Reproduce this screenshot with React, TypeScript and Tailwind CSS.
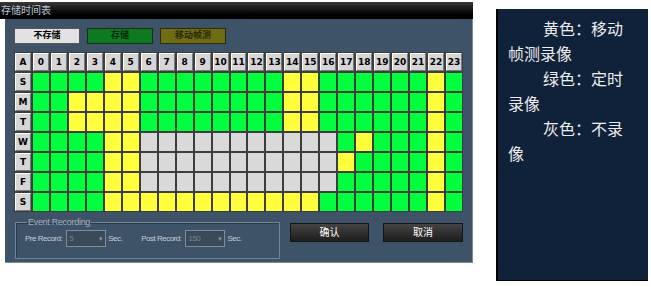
import React from 'react';

const HOURS = Array.from({ length: 24 }, (_, i) => i);

// G = 定时录像, Y = 移动帧测, L = 不录像
const WEEK: { day: string; plan: string }[] = [
  { day: 'S', plan: 'GGGGYYGGGGGGGGYYGGGGGGYG' },
  { day: 'M', plan: 'GGYYYYGGGGGGGGYYGGGGGGYG' },
  { day: 'T', plan: 'GGYYYYGGGGGGGGYYGGGGGGYG' },
  { day: 'W', plan: 'GGGGYYLLLLLLLLLLLGYGGGYG' },
  { day: 'T', plan: 'GGGGYYLLLLLLLLLLLYGGGGYG' },
  { day: 'F', plan: 'GGGGYYLLLLLLLLLLLGGGGGYG' },
  { day: 'S', plan: 'GGGGYYYYYYYYYYYYGGGGGGYG' },
];

const cellColor: Record<string, string> = {
  G: 'bg-[#00ff3c]',
  Y: 'bg-[#ffff3c]',
  L: 'bg-[#d9d9d9]',
};

const HeadCell = ({ label }: { label: string }) => (
  <div className="flex items-center justify-center bg-[#d6d6d6] border border-t-white border-l-white border-b-[#7a7a7a] border-r-[#7a7a7a] text-[9px] font-bold text-black leading-none">
    {label}
  </div>
);

const Select = ({ value }: { value: string }) => (
  <div className="flex h-[17px] w-[40px] shrink-0 items-center border border-[#7d8d9c] bg-[#3b4a59]">
    <span className="flex-1 pl-[2px] text-[8px] text-[#75859a] leading-none">{value}</span>
    <span className="mr-[2px] text-[6px] text-[#8a99a8] leading-none">▼</span>
  </div>
);

export default function App() {
  return (
    <div className="flex h-[287px] w-[651px] items-start bg-white pt-[2px]" style={{ fontFamily: '"Liberation Sans", "Noto Sans CJK SC", sans-serif' }}>
      {/* Window */}
      <div className="flex w-[473px] flex-col">
        <div className="flex h-[17px] items-center bg-gradient-to-b from-[#3a3a3a] via-[#111] to-black pl-[1px] text-[10px] text-[#b9c4d0]">
          存储时间表
        </div>
        <div className="ml-[5px] flex h-[244px] flex-col border-r border-b border-[#7c8b99] bg-[#3f5368] pl-[9px]">
          {/* mode buttons */}
          <div className="mt-[9px] flex gap-[7px]">
            <div className="flex h-[16px] w-[66px] items-center justify-center border border-[#555] bg-[#e2e2e2] text-[9px] font-bold text-black">不存储</div>
            <div className="flex h-[16px] w-[66px] items-center justify-center border border-[#1d2a1d] bg-[#0d7a20] text-[9px] font-bold text-[#082c0a]">存储</div>
            <div className="flex h-[16px] w-[66px] items-center justify-center border border-[#2c2b10] bg-[#706c14] text-[9px] font-bold text-[#2a2906]">移动帧测</div>
          </div>

          {/* schedule grid */}
          <div
            className="mt-[8px] grid w-[449px] grid-cols-[repeat(25,1fr)] grid-rows-[repeat(8,18px)] gap-[2px] bg-[#3d3d3d] p-[1px]"
            style={{ fontFamily: '"DejaVu Sans", sans-serif' }}
          >
            <HeadCell label="A" />
            {HOURS.map((h) => (
              <HeadCell key={h} label={String(h)} />
            ))}
            {WEEK.map((row, r) => (
              <React.Fragment key={r}>
                <HeadCell label={row.day} />
                {row.plan.split('').map((c, i) => (
                  <div key={i} className={cellColor[c]} />
                ))}
              </React.Fragment>
            ))}
          </div>

          {/* event recording + actions */}
          <div className="mt-[6px] flex items-start">
            <fieldset className="ml-[1px] h-[41px] w-[265px] border border-[#71859a] pl-[9px] shadow-[inset_1px_1px_0_#2c3b4a]">
              <legend className="ml-[2px] px-[1px] text-[9px] tracking-[-0.3px] text-[#a3afbb] leading-none whitespace-nowrap">Event Recording</legend>
              <div className="mt-[3px] flex items-center whitespace-nowrap text-[8px] tracking-[-0.5px] text-[#c3ccd5]">
                <span className="mr-[4px] shrink-0">Pre Record:</span>
                <Select value="5" />
                <span className="ml-[2px] w-[33px] shrink-0">Sec.</span>
                <span className="mr-[4px] shrink-0">Post Record:</span>
                <Select value="150" />
                <span className="ml-[2px] shrink-0">Sec.</span>
              </div>
            </fieldset>
            <div className="ml-[10px] mt-[5px] flex gap-[14px]">
              <div className="flex h-[19px] w-[79px] items-center justify-center border border-[#151515] bg-gradient-to-b from-[#444] to-[#1e1e1e] text-[10px] text-white">确认</div>
              <div className="flex h-[19px] w-[80px] items-center justify-center border border-[#151515] bg-gradient-to-b from-[#444] to-[#1e1e1e] text-[10px] text-white">取消</div>
            </div>
          </div>
        </div>
      </div>

      {/* Legend note */}
      <div
        className="ml-[23px] mt-[7px] h-[272px] w-[152px] border-l-2 border-b border-black bg-[#10213a] pl-[10px] pt-[7px] text-[16px] leading-[25px] text-[#ececec]"
        style={{ fontFamily: '"Noto Sans CJK SC", sans-serif' }}
      >
        <p className="w-[124px] indent-[35px]">黄色：移动帧测录像</p>
        <p className="w-[124px] indent-[35px]">绿色：定时录像</p>
        <p className="w-[124px] indent-[35px]">灰色：不录像</p>
      </div>
    </div>
  );
}
